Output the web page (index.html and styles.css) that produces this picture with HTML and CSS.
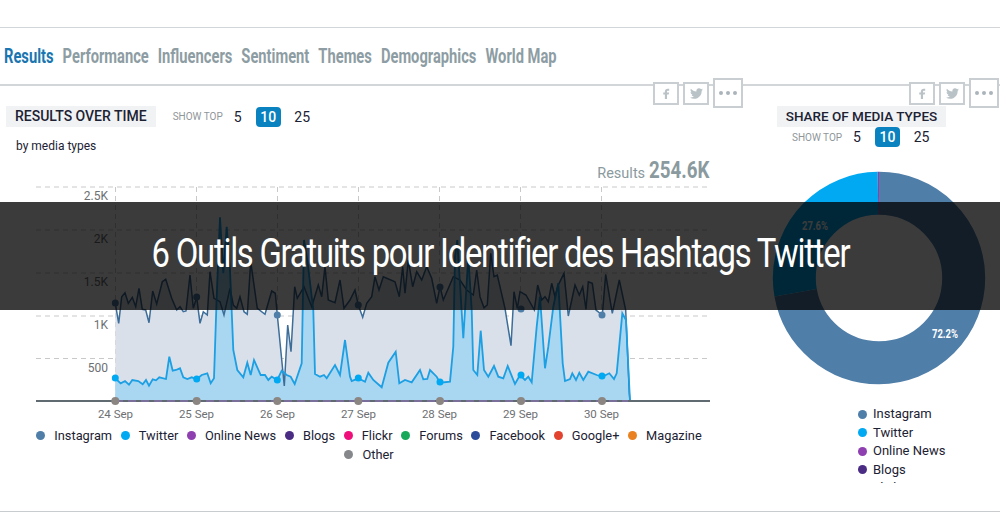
FILE: index.html
```html
<!DOCTYPE html>
<html lang="en">
<head>
  <meta charset="UTF-8" />
  <title>6 Outils Gratuits pour Identifier des Hashtags Twitter</title>
  <link rel="stylesheet" href="styles.css">
</head>
<body>
  <div class="page">
    <nav class="tabs">
      <div class="tab-row">
        <a class="tab active">Results</a>
        <a class="tab">Performance</a>
        <a class="tab">Influencers</a>
        <a class="tab">Sentiment</a>
        <a class="tab">Themes</a>
        <a class="tab">Demographics</a>
        <a class="tab">World Map</a>
      </div>
    </nav>

    <div class="columns">
      <!-- RESULTS OVER TIME -->
      <section class="time-panel">
        <div class="share">
          <span class="share-btn"><svg viewBox="0 0 24 24"><path d="M14 7h3V3h-3c-2.800 0-5 2.200-5 5v2H6v4h3v8h4v-8h3l1-4h-4V8c0-.6.4-1 1-1z"/></svg></span>
          <span class="share-btn"><svg viewBox="0 0 24 24"><path d="M23.953 4.570a10 10 0 01-2.825.775 4.958 4.958 0 002.163-2.723c-.951.555-2.005.959-3.127 1.184a4.920 4.920 0 00-8.384 4.482C7.690 8.095 4.067 6.130 1.640 3.162a4.822 4.822 0 00-.666 2.475c0 1.710.870 3.213 2.188 4.096a4.904 4.904 0 01-2.228-.616v.060a4.923 4.923 0 003.946 4.827 4.996 4.996 0 01-2.212.085 4.936 4.936 0 004.604 3.417 9.867 9.867 0 01-6.102 2.105c-.390 0-.779-.023-1.170-.067a13.995 13.995 0 007.557 2.209c9.053 0 13.998-7.496 13.998-13.985 0-.210 0-.420-.015-.630A9.935 9.935 0 0024 4.590z"/></svg></span>
          <span class="share-btn more"><i></i><i></i><i></i></span>
        </div>
        <div class="panel-head">
          <h3 class="panel-title">RESULTS OVER TIME</h3>
          <div class="top-picker">
            <span class="show-top">SHOW TOP</span>
            <span class="top-num">5</span>
            <span class="top-num selected">10</span>
            <span class="top-num">25</span>
          </div>
        </div>
        <p class="by-media">by media types</p>
        <p class="results-total">Results <b>254.6K</b></p>

        <svg class="line-chart" viewBox="0 183 720 240">
          <g class="grid">
            <line x1="36" y1="187" x2="710" y2="187"/>
            <line x1="36" y1="230" x2="710" y2="230"/>
            <line x1="36" y1="273" x2="710" y2="273"/>
            <line x1="36" y1="316" x2="710" y2="316"/>
            <line x1="36" y1="358.500" x2="710" y2="358.500"/>
            <line x1="115.500" y1="187" x2="115.500" y2="401"/>
            <line x1="196.500" y1="187" x2="196.500" y2="401"/>
            <line x1="277.500" y1="187" x2="277.500" y2="401"/>
            <line x1="358.500" y1="187" x2="358.500" y2="401"/>
            <line x1="439.500" y1="187" x2="439.500" y2="401"/>
            <line x1="520.500" y1="187" x2="520.500" y2="401"/>
            <line x1="601.500" y1="187" x2="601.500" y2="401"/>
          </g>
          <g class="y-labels">
            <text x="108" y="200">2.5K</text>
            <text x="108" y="243">2K</text>
            <text x="108" y="286">1.5K</text>
            <text x="108" y="329">1K</text>
            <text x="108" y="372">500</text>
          </g>

          <polygon class="area-instagram" points="115.300,401 115.300,303.300 118.700,323.300 121.700,296.700 125,292.700 128.300,303.300 132.300,297.300 135.700,306.700 139,288.300 142.300,309.300 145.700,310 149,322.700 152.700,291 156.700,304 162.300,281.700 165.700,279.300 171.700,298.300 176.700,310 180,306.700 183.300,311.700 186,311 190,275 193.300,308.300 196.700,297.300 200,323.300 203.300,311.700 207.300,315 210,271.700 214,298.300 220,301.700 224,315 230,288.300 233.300,305 236.700,308.300 240,296.700 244,311.700 247.300,314.300 250.700,261.700 257.300,308.300 265,314.300 271.700,291 275.300,293.300 277.300,315 284.300,386 287.700,325 291,351.700 294.700,286.700 297.300,298.300 304,286.700 311.700,306.700 318.300,285 321.700,296.700 325,266.700 328.300,300 335,302.700 340,280 344,308.300 350,300 355,290 358.300,305 362.700,317.300 366.700,303.300 371.700,296.700 375,276.700 379,290 383.300,276.700 395,281.700 399.300,296.700 402.700,266.700 405,293.300 408.300,260 412.700,286.700 416.700,271.700 421.700,280 426.700,266.700 431.700,278.300 436.700,303.300 440,286.700 443.300,300 453.300,276.700 460,280 466.700,290 473.300,295 476.700,270 480,296.700 484,307.700 487.300,305 490.700,253.300 494,276.700 497.300,275 505,308.300 511,345.700 514,291.700 517.300,308.300 520,291.700 526,295 534.300,310 537.700,285 541.700,300 545,296.700 548.300,301.700 551.700,283.300 555,296.700 558.300,285 564,273.300 568.300,316 575,285 579.300,295 582.700,286.700 586,309.300 588.300,281.700 592.300,283.300 596,310 602.300,315 605.700,274.300 612.300,313.300 619.300,280 625.700,310 629.300,393 630,401"/>
          <polygon class="area-twitter" points="115.300,401 115.300,378.300 120.700,383.300 125,381 129,384.700 132.300,380 138.300,381 142.700,384.300 146,380 149,385.700 152.700,379.300 156,380.300 159.300,377.300 166,379 169.300,356.700 172.700,370.700 176,370 180,368.300 183.300,377.300 187.300,379 191.700,377.300 196.700,379.300 201.700,375 207.300,373.300 210.700,383.300 214,378.300 216.700,296.700 220,217.300 223.300,273.300 226.700,226.700 230,270 233.300,350 237.300,370 243.300,377.300 247.300,362.700 250.700,375 254,360 260.700,375 265,375 268.300,380 271.700,376.700 277.300,380 281.700,370.700 286.700,375 290.700,376.700 294.700,384 301.700,363.300 304,240 307.300,260 313.300,310 315,374 320,376.700 324,375 326.700,378.300 335,365 340,375 345,340 350,376.700 351.700,381 358.300,378.300 365,381.700 368.300,372.700 373.300,380 381.700,387.300 388.300,362.700 395.700,351.700 399.300,383.300 405,380 411.700,382.300 420,370 423.300,379.300 427.300,379 430,370 436.700,376.700 440,382.700 450,381.700 453.300,346.700 455,256.700 457.300,240 463.300,338.300 468.300,256.700 471.700,310 473.300,370 477.300,375 480.700,330.700 484,370 488.300,376.700 494,366 498.300,376.700 503.300,378.300 507.700,366 515,384 520,375 525,380 528.300,376.700 531.700,382.300 536.700,326.700 540,296.700 545,368.300 548.300,346.700 553.300,306.700 558.300,283.300 562.700,363.300 565,381 570,379 572.300,373.300 576,380 579.300,372.700 583.300,380 588.300,371.700 596.700,375 602.300,376.700 609.300,373.300 614,379 616.700,373.300 622.300,313.300 626,320 630,401"/>
          <polyline class="line-instagram" points="115.300,303.300 118.700,323.300 121.700,296.700 125,292.700 128.300,303.300 132.300,297.300 135.700,306.700 139,288.300 142.300,309.300 145.700,310 149,322.700 152.700,291 156.700,304 162.300,281.700 165.700,279.300 171.700,298.300 176.700,310 180,306.700 183.300,311.700 186,311 190,275 193.300,308.300 196.700,297.300 200,323.300 203.300,311.700 207.300,315 210,271.700 214,298.300 220,301.700 224,315 230,288.300 233.300,305 236.700,308.300 240,296.700 244,311.700 247.300,314.300 250.700,261.700 257.300,308.300 265,314.300 271.700,291 275.300,293.300 277.300,315 284.300,386 287.700,325 291,351.700 294.700,286.700 297.300,298.300 304,286.700 311.700,306.700 318.300,285 321.700,296.700 325,266.700 328.300,300 335,302.700 340,280 344,308.300 350,300 355,290 358.300,305 362.700,317.300 366.700,303.300 371.700,296.700 375,276.700 379,290 383.300,276.700 395,281.700 399.300,296.700 402.700,266.700 405,293.300 408.300,260 412.700,286.700 416.700,271.700 421.700,280 426.700,266.700 431.700,278.300 436.700,303.300 440,286.700 443.300,300 453.300,276.700 460,280 466.700,290 473.300,295 476.700,270 480,296.700 484,307.700 487.300,305 490.700,253.300 494,276.700 497.300,275 505,308.300 511,345.700 514,291.700 517.300,308.300 520,291.700 526,295 534.300,310 537.700,285 541.700,300 545,296.700 548.300,301.700 551.700,283.300 555,296.700 558.300,285 564,273.300 568.300,316 575,285 579.300,295 582.700,286.700 586,309.300 588.300,281.700 592.300,283.300 596,310 602.300,315 605.700,274.300 612.300,313.300 619.300,280 625.700,310 629.300,393 630,401"/>
          <polyline class="line-twitter" points="115.300,378.300 120.700,383.300 125,381 129,384.700 132.300,380 138.300,381 142.700,384.300 146,380 149,385.700 152.700,379.300 156,380.300 159.300,377.300 166,379 169.300,356.700 172.700,370.700 176,370 180,368.300 183.300,377.300 187.300,379 191.700,377.300 196.700,379.300 201.700,375 207.300,373.300 210.700,383.300 214,378.300 216.700,296.700 220,217.300 223.300,273.300 226.700,226.700 230,270 233.300,350 237.300,370 243.300,377.300 247.300,362.700 250.700,375 254,360 260.700,375 265,375 268.300,380 271.700,376.700 277.300,380 281.700,370.700 286.700,375 290.700,376.700 294.700,384 301.700,363.300 304,240 307.300,260 313.300,310 315,374 320,376.700 324,375 326.700,378.300 335,365 340,375 345,340 350,376.700 351.700,381 358.300,378.300 365,381.700 368.300,372.700 373.300,380 381.700,387.300 388.300,362.700 395.700,351.700 399.300,383.300 405,380 411.700,382.300 420,370 423.300,379.300 427.300,379 430,370 436.700,376.700 440,382.700 450,381.700 453.300,346.700 455,256.700 457.300,240 463.300,338.300 468.300,256.700 471.700,310 473.300,370 477.300,375 480.700,330.700 484,370 488.300,376.700 494,366 498.300,376.700 503.300,378.300 507.700,366 515,384 520,375 525,380 528.300,376.700 531.700,382.300 536.700,326.700 540,296.700 545,368.300 548.300,346.700 553.300,306.700 558.300,283.300 562.700,363.300 565,381 570,379 572.300,373.300 576,380 579.300,372.700 583.300,380 588.300,371.700 596.700,375 602.300,376.700 609.300,373.300 614,379 616.700,373.300 622.300,313.300 626,320 630,401"/>

          <line class="baseline" x1="36" y1="401" x2="710" y2="401"/>
          <line class="baseline-dash" x1="115" y1="401" x2="628" y2="401"/>

          <g class="dots-instagram">
            <circle cx="115.300" cy="303" r="3.500"/><circle cx="196.700" cy="297" r="3.500"/><circle cx="277.300" cy="315" r="3.500"/><circle cx="358.300" cy="305" r="3.500"/><circle cx="440" cy="287" r="3.500"/><circle cx="521" cy="309" r="3.500"/><circle cx="602" cy="315" r="3.500"/>
          </g>
          <g class="dots-twitter">
            <circle cx="115.300" cy="378" r="3.500"/><circle cx="196.700" cy="379" r="3.500"/><circle cx="277.300" cy="380" r="3.500"/><circle cx="358.300" cy="378" r="3.500"/><circle cx="440" cy="382" r="3.500"/><circle cx="521" cy="375" r="3.500"/><circle cx="602" cy="376" r="3.500"/>
          </g>
          <g class="dots-other">
            <circle cx="115.300" cy="401" r="4"/><circle cx="196.700" cy="401" r="4"/><circle cx="277.300" cy="401" r="4"/><circle cx="358.300" cy="401" r="4"/><circle cx="440" cy="401" r="4"/><circle cx="521" cy="401" r="4"/><circle cx="602" cy="401" r="4"/>
          </g>
          <g class="x-labels">
            <text x="115.500" y="418">24 Sep</text>
            <text x="196.500" y="418">25 Sep</text>
            <text x="277.500" y="418">26 Sep</text>
            <text x="358.500" y="418">27 Sep</text>
            <text x="439.500" y="418">28 Sep</text>
            <text x="520.500" y="418">29 Sep</text>
            <text x="601.500" y="418">30 Sep</text>
          </g>
        </svg>

        <ul class="legend wide">
          <li><i style="background:#4f7ea8"></i>Instagram</li>
          <li><i style="background:#00a9f1"></i>Twitter</li>
          <li><i style="background:#8e3fb0"></i>Online News</li>
          <li><i style="background:#4b2c85"></i>Blogs</li>
          <li><i style="background:#ee0f7a"></i>Flickr</li>
          <li><i style="background:#18a85a"></i>Forums</li>
          <li><i style="background:#2b4c9b"></i>Facebook</li>
          <li><i style="background:#e2432e"></i>Google+</li>
          <li><i style="background:#ea8120"></i>Magazine</li>
          <li><i style="background:#85878a"></i>Other</li>
        </ul>
      </section>

      <!-- SHARE OF MEDIA TYPES -->
      <section class="share-panel">
        <div class="share">
          <span class="share-btn"><svg viewBox="0 0 24 24"><path d="M14 7h3V3h-3c-2.800 0-5 2.200-5 5v2H6v4h3v8h4v-8h3l1-4h-4V8c0-.6.4-1 1-1z"/></svg></span>
          <span class="share-btn"><svg viewBox="0 0 24 24"><path d="M23.953 4.570a10 10 0 01-2.825.775 4.958 4.958 0 002.163-2.723c-.951.555-2.005.959-3.127 1.184a4.920 4.920 0 00-8.384 4.482C7.690 8.095 4.067 6.130 1.640 3.162a4.822 4.822 0 00-.666 2.475c0 1.710.870 3.213 2.188 4.096a4.904 4.904 0 01-2.228-.616v.060a4.923 4.923 0 003.946 4.827 4.996 4.996 0 01-2.212.085 4.936 4.936 0 004.604 3.417 9.867 9.867 0 01-6.102 2.105c-.390 0-.779-.023-1.170-.067a13.995 13.995 0 007.557 2.209c9.053 0 13.998-7.496 13.998-13.985 0-.210 0-.420-.015-.630A9.935 9.935 0 0024 4.590z"/></svg></span>
          <span class="share-btn more"><i></i><i></i><i></i></span>
        </div>
        <h3 class="panel-title small">SHARE OF MEDIA TYPES</h3>
        <div class="top-picker tight">
          <span class="show-top">SHOW TOP</span>
          <span class="top-num">5</span>
          <span class="top-num selected">10</span>
          <span class="top-num">25</span>
        </div>

        <svg class="donut" viewBox="0 0 224 224">
          <g transform="rotate(-90 112 112)">
            <circle class="slice" cx="112" cy="112" r="84.700" pathLength="100" stroke="#4f7ea8" stroke-dasharray="72.2 27.8"/>
            <circle class="slice" cx="112" cy="112" r="84.700" pathLength="100" stroke="#00a9f1" stroke-dasharray="27.6 72.4" stroke-dashoffset="-72.2"/>
            <circle class="slice" cx="112" cy="112" r="84.700" pathLength="100" stroke="#8e3fb0" stroke-dasharray="0.2 99.8" stroke-dashoffset="-99.8"/>
          </g>
          <text class="pct" x="178" y="172" textLength="26" lengthAdjust="spacingAndGlyphs">72.2%</text>
          <text class="pct" x="48" y="64" textLength="26" lengthAdjust="spacingAndGlyphs">27.6%</text>
        </svg>

        <ul class="legend stacked">
          <li><i style="background:#4f7ea8"></i>Instagram</li>
          <li><i style="background:#00a9f1"></i>Twitter</li>
          <li><i style="background:#8e3fb0"></i>Online News</li>
          <li><i style="background:#4b2c85"></i>Blogs</li>
          <li><i style="background:#ee0f7a"></i>Flickr</li>
        </ul>
      </section>
    </div>
  </div>

  <div class="banner">
    <h1>6 Outils Gratuits pour Identifier des Hashtags Twitter</h1>
  </div>
</body>
</html>
```

FILE: styles.css
```css
body {
  font-family: Roboto, sans-serif;
  background-color: #fff;
  color: #1c2233;
  margin: 0;
  padding: 0;
  width: 1000px;
  height: 512px;
  overflow: hidden;
  position: relative;
}
.page {
  height: 512px;
  padding-top: 27px;
  box-sizing: border-box;
  border-bottom: 1px solid #c9cccf;
}
.tabs {
  display: flex;
  align-items: center;
  height: 56px;
  padding-left: 4px;
  border-top: 1px solid #d3d6d8;
  border-bottom: 2px solid #d3d6d8;
}
/* no condensed face installed, so the row is squeezed as a whole */
.tab-row {
  display: flex;
  gap: 12.900px;
  transform: scaleX(0.7);
  transform-origin: left center;
  font-size: 21px;
  font-weight: bold;
  color: #8d9da3;
  white-space: nowrap;
}
.tab.active {
  color: #1a76b0;
}
.columns {
  display: flex;
}
.time-panel {
  width: 746px;
  position: relative;
}
.share-panel {
  width: 254px;
  position: relative;
  padding-top: 20px;
  box-sizing: border-box;
}

/* share buttons sit on top of the tab line */
.share {
  position: absolute;
  top: -8px;
  right: 3px;
  display: flex;
  align-items: center;
  gap: 4px;
}
.share-panel .share {
  right: 1px;
}
.share-btn {
  box-sizing: border-box;
  width: 26px;
  height: 23px;
  border: 2px solid #c8ced2;
  background: white;
  display: flex;
  align-items: center;
  justify-content: center;
}
.share-btn svg {
  width: 13px;
  height: 13px;
  fill: #b9c2c7;
}
.share-btn.more {
  width: 30px;
  height: 30px;
  gap: 3px;
}
.share-btn.more i {
  width: 4px;
  height: 4px;
  border-radius: 50%;
  background: #aab4ba;
}

.panel-head {
  display: flex;
  align-items: center;
  padding: 20px 0 0 6px;
}
.panel-title {
  margin: 0;
  background-color: #f0f2f4;
  font-size: 14px;
  font-weight: 500;
  line-height: 21px;
  padding: 0 9px;
}
.panel-title.small {
  width: 169px;
  box-sizing: border-box;
  margin-left: 31px;
  padding: 0;
  text-align: center;
  font-size: 13.500px;
}
.top-picker {
  display: flex;
  align-items: center;
  margin-left: 17px;
  font-size: 14px;
}
.top-picker.tight {
  margin-left: 46px;
  height: 20px;
}
.show-top {
  font-size: 10px;
  color: #8f969a;
  width: 50px;
  margin-right: 7px;
  white-space: nowrap;
}
.top-num {
  width: 25px;
  height: 20px;
  line-height: 20px;
  text-align: center;
  margin-right: 9px;
}
.top-num.selected {
  background-color: #0b82c0;
  color: white;
  border-radius: 4px;
  font-weight: 500;
}
.top-num:nth-child(2) {
  width: 16px;
  margin-right: 10px;
}
.by-media {
  margin: 11px 0 0 16px;
  font-size: 12px;
  line-height: 16px;
}
.results-total {
  margin: 3px 0 0;
  width: 709px;
  height: 26px;
  text-align: right;
  font-size: 14.500px;
  line-height: 26px;
  color: #8a9a9e;
}
.results-total b {
  display: inline-block;
  margin-left: -17px;
  font-size: 24px;
  transform: scaleX(0.78);
  transform-origin: right center;
}

/* line chart */
.line-chart {
  display: block;
  width: 720px;
  height: 240px;
}
.grid line {
  stroke: #c9c9c9;
  stroke-width: 1;
  stroke-dasharray: 5 4;
}
.y-labels text {
  text-anchor: end;
  font-size: 12px;
  fill: #6d7073;
}
.x-labels text {
  text-anchor: middle;
  font-size: 11.500px;
  fill: #6d7073;
}
.area-instagram {
  fill: #d9e0ea;
}
.area-twitter {
  fill: #a9d6f0;
}
.line-instagram {
  fill: none;
  stroke: #3d6d99;
  stroke-width: 1.500;
}
.line-twitter {
  fill: none;
  stroke: #1c9fe3;
  stroke-width: 1.800;
}
.baseline {
  stroke: #5f6b70;
  stroke-width: 2;
}
.baseline-dash {
  stroke: #7a6f9a;
  stroke-width: 2;
  stroke-dasharray: 8 5;
}
.dots-instagram circle {
  fill: #4f7ea8;
}
.dots-twitter circle {
  fill: #00a9f1;
}
.dots-other circle {
  fill: #8c8683;
}

/* legends */
.legend {
  list-style: none;
  margin: 0;
  padding: 0;
  font-size: 12.800px;
}
.legend li {
  display: flex;
  align-items: center;
}
.legend i {
  width: 9px;
  height: 9px;
  border-radius: 50%;
  margin-right: 9px;
}
.legend.wide {
  width: 674px;
  margin: 3px 0 0 32px;
  display: flex;
  flex-wrap: wrap;
  justify-content: center;
  column-gap: 8.700px;
  line-height: 19px;
}
.legend.stacked {
  margin: 15px 0 0 112px;
  height: 78px;
  overflow: hidden;
  line-height: 18.500px;
  font-size: 13px;
}
.legend.stacked i {
  margin-right: 6px;
}

/* donut */
.donut {
  display: block;
  width: 224px;
  height: 224px;
  margin: 19px 0 0 21px;
}
.slice {
  fill: none;
  stroke-width: 43;
}
.pct {
  text-anchor: middle;
  font-size: 13px;
  font-weight: bold;
  fill: white;
}

/* title strip over the screenshot */
.banner {
  position: absolute;
  top: 202px;
  left: 0;
  width: 100%;
  height: 108px;
  padding-bottom: 5px;
  box-sizing: border-box;
  background: rgba(0, 0, 0, 0.77);
  display: flex;
  align-items: center;
  justify-content: center;
}
.banner h1 {
  margin: 0;
  color: white;
  font-size: 40px;
  font-weight: 400;
  letter-spacing: -1.500px;
  white-space: nowrap;
  transform: scaleX(0.82);
}
```
